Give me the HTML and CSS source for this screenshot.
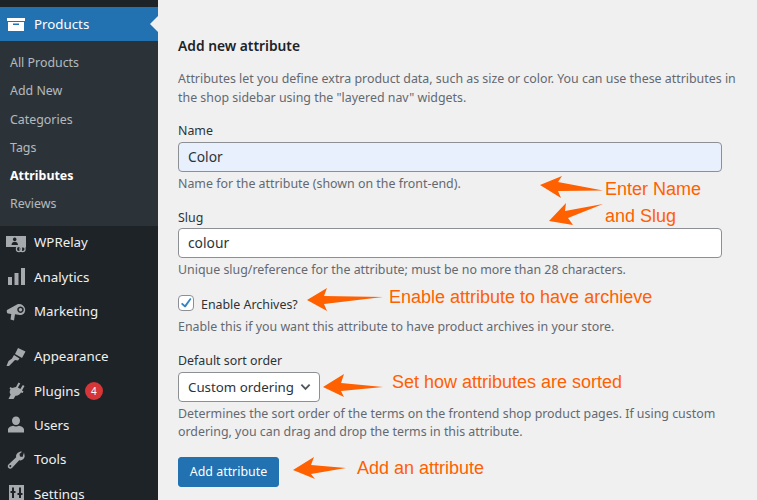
FILE: index.html
```html
<!DOCTYPE html>
<html lang="en">
<head>
<meta charset="utf-8">
<title>Add new attribute</title>
<link rel="stylesheet" href="styles.css">
</head>
<body>
<div class="page">
  <aside class="sidebar">
    <a class="menu-item current">
      <svg class="icon" viewBox="0 0 20 20"><path fill="#fff" fill-rule="evenodd" d="M1 4h18v3H1zM2 8h16v9H2zM7 9.500v1.500h6V9.500z"/></svg>
      <span>Products</span>
    </a>
    <ul class="submenu">
      <li>All Products</li>
      <li>Add New</li>
      <li>Categories</li>
      <li>Tags</li>
      <li class="active">Attributes</li>
      <li>Reviews</li>
    </ul>
    <a class="menu-item">
      <svg class="icon" viewBox="0 0 20 20"><path fill="#a7aaad" fill-rule="evenodd" d="M0 3h20v11.500h-4.500a3.500 3.500 0 0 0-5-.5H0zM8.700 4.500a1.800 1.800 0 1 0 .01 0zM5.500 12c.2-2.500 1.500-3.200 3.300-3.200s3 .7 3.200 3.200z"/><circle cx="13" cy="16" r="2.600" fill="none" stroke="#a7aaad" stroke-width="1.200"/><circle cx="16.500" cy="16" r="2.600" fill="none" stroke="#a7aaad" stroke-width="1.200"/></svg>
      <span>WPRelay</span>
    </a>
    <a class="menu-item">
      <svg class="icon" viewBox="0 0 20 20"><path fill="#a7aaad" d="M2 10h4v8H2zM8.500 6h4v12h-4zM15 1h4v17h-4z"/></svg>
      <span>Analytics</span>
    </a>
    <a class="menu-item">
      <svg class="icon" viewBox="0 0 20 20"><path fill="#a7aaad" fill-rule="evenodd" d="M1 8l10-5.500c3-1.500 7 .5 8 4 .8 3.500-1.500 6.500-5 6.500l-5-.8L8 18.500l-3.500-1 .8-5.500L2 11.500C.8 11 .5 9 1 8zM14.500 4.500a3.200 3.200 0 1 0 .01 0zM14.500 6a1.700 1.700 0 1 1-.01 0z"/></svg>
      <span>Marketing</span>
    </a>
    <div class="menu-gap"></div>
    <a class="menu-item">
      <svg class="icon" viewBox="0 0 20 20"><path fill="#a7aaad" d="M12 1l7.500 3.500-3.500 6.500-7-4zM8 8l5.500 3.500-1.500 2-3-.5-1.500 1.500L3 19H.5l2-5L6 11.500z"/></svg>
      <span>Appearance</span>
    </a>
    <a class="menu-item">
      <svg class="icon" viewBox="0 0 20 20"><path fill="#a7aaad" d="M12.500 1.500l1.800 1-2.400 4 2.500 1.500 2.400-4 1.700 1-2.500 4.500 1.500 1-1 1.500-1.500-.5c-1 2-3.200 3.500-5.500 3.200l-2 3.300H2.500l2.200-4.500C3.500 12.500 3.300 10 4.500 8.500L3.500 7.500l1-1.500 1.500 1 2-.5 2-.5z"/></svg>
      <span>Plugins</span>
      <b class="badge">4</b>
    </a>
    <a class="menu-item">
      <svg class="icon" viewBox="0 0 20 20"><path fill="#a7aaad" d="M10 1.500c2.500 0 4 2 4 4.200s-1.500 4.300-4 4.300-4-2.100-4-4.300 1.500-4.200 4-4.200zM2 17.500v-3c0-2 3-3.500 5-3.800 1.800 1 4.200 1 6 0 2 .3 5 1.800 5 3.800v3z"/></svg>
      <span>Users</span>
    </a>
    <a class="menu-item">
      <svg class="icon" viewBox="0 0 20 20"><path fill="#a7aaad" fill-rule="evenodd" d="M18 2.500l.7 3.500c0 2.500-2.500 5-5.500 4.300L6 18c-1 1-2.500 1-3.500 0s-1-2.500 0-3.500l7.700-7.200C9.500 4.500 12 2 15 1.500l1 .2-2.500 2.300.5 2.500 2.500.5zM4.300 15a1 1 0 1 0 .01 0z"/></svg>
      <span>Tools</span>
    </a>
    <a class="menu-item">
      <svg class="icon" viewBox="0 0 20 20"><path fill="#a7aaad" fill-rule="evenodd" d="M3 1h15v15H3zM6 3.500v3.500H4.500v2H6v5h2V9h1.500V7H8V3.500zM13 3.500V9h-1.500v2H13v3h2v-3h1.500V9H15V3.500z"/></svg>
      <span>Settings</span>
    </a>
  </aside>

  <main class="content">
    <h2 class="title">Add new attribute</h2>
    <p class="intro">Attributes let you define extra product data, such as size or color. You can use these attributes in the shop sidebar using the "layered nav" widgets.</p>

    <div class="field">
      <label class="label">Name</label>
      <div class="input filled">Color</div>
      <p class="hint">Name for the attribute (shown on the front-end).</p>
    </div>

    <div class="field slug-field">
      <label class="label">Slug</label>
      <div class="input">colour</div>
      <p class="hint">Unique slug/reference for the attribute; must be no more than 28 characters.</p>
    </div>

    <div class="field check-field">
      <div class="check-row">
        <span class="checkbox"><svg viewBox="0 0 16 16"><path fill="#3582c4" d="M12.700 2.400l1.500 1.100-6.500 9.400H6.300L2.300 9l1.400-1.400 3 2.800z"/></svg></span>
        <span class="check-label">Enable Archives?</span>
      </div>
      <p class="hint">Enable this if you want this attribute to have product archives in your store.</p>
    </div>

    <div class="field">
      <label class="label">Default sort order</label>
      <div class="select">Custom ordering
        <svg viewBox="0 0 12 8"><path fill="none" stroke="#50575e" stroke-width="2" d="M1.500 1.500L6 6l4.500-4.500"/></svg>
      </div>
      <p class="hint">Determines the sort order of the terms on the frontend shop product pages. If using custom ordering, you can drag and drop the terms in this attribute.</p>
    </div>

    <div class="button">Add attribute</div>
  </main>

  <div class="notes">
    <svg class="arrows" viewBox="0 0 757 500">
      <path d="M540 185L562 176L558 182L603 190.500L558 191L561 198z"/>
      <path d="M549 221L566 203L565 211L603 204L568 218L573 225z"/>
      <path d="M307 300L327 288L324 296L383 297L324 304L327 311z"/>
      <path d="M323 387L344 374L341 383L383 387L341 391L344 397z"/>
      <path d="M293 470L314 457L311 465L346 468L311 474L315 479z"/>
    </svg>
    <span class="note n1">Enter Name</span>
    <span class="note n2">and Slug</span>
    <span class="note n3">Enable attribute to have archieve</span>
    <span class="note n4">Set how attributes are sorted</span>
    <span class="note n5">Add an attribute</span>
  </div>
</div>
</body>
</html>
```

FILE: styles.css
```css
* { box-sizing: border-box; }
html, body { margin: 0; height: 100%; overflow: hidden; }
body {
  background: #f0f0f1;
  font-family: "Noto Sans", "Open Sans", sans-serif;
  font-size: 12.400px;
  color: #3c434a;
}
.page { position: relative; display: flex; width: 757px; height: 500px; overflow: hidden; }

.sidebar {
  flex: 0 0 158px;
  background: #1d2327;
  padding-top: 7px;
  font-size: 13.300px;
}
.menu-item {
  position: relative;
  display: flex;
  align-items: center;
  height: 34.300px;
  padding-left: 6px;
  color: #f0f0f1;
}
.menu-item span { position: relative; top: -0.500px; }
.menu-item .icon { flex: 0 0 20px; width: 20px; height: 20px; margin-right: 8px; }
.menu-item.current { height: 34px; background: #2271b1; color: #fff; }
.menu-item.current::after {
  content: "";
  position: absolute;
  right: 0;
  top: 50%;
  margin-top: -8px;
  border: 8px solid transparent;
  border-right-color: #f0f0f1;
  border-left-width: 0;
}
.menu-gap { height: 11px; }
.badge {
  display: inline-flex;
  align-items: center;
  justify-content: center;
  width: 18px;
  height: 18px;
  margin-left: 5px;
  border-radius: 50%;
  background: #d63638;
  color: #fff;
  font-size: 10px;
  font-weight: 400;
}
.submenu {
  list-style: none;
  margin: 0;
  padding: 8.200px 0 7.100px;
  background: #2c3338;
  color: rgba(240, 246, 252, 0.7);
  font-size: 12.400px;
}
.submenu li { height: 28.250px; line-height: 28px; padding-left: 10px; }
.submenu .active { color: #fff; font-weight: 700; }

.content { flex: 1; padding: 37px 8px 0 20px; min-width: 0; }
.title { margin: 0; font-size: 13.800px; line-height: 18px; font-weight: 600; color: #1d2327; }
.intro { margin: 15px 0 0; line-height: 18.500px; color: #646970; }
.field { margin-top: 15px; }
.label { display: block; line-height: 18px; color: #2c3338; }
.input {
  width: 544px;
  height: 30px;
  margin-top: 2px;
  padding: 0 9px;
  line-height: 28px;
  font-size: 13.800px;
  background: #fff;
  border: 1px solid #8c8f94;
  border-radius: 4px;
  color: #2c3338;
}
.slug-field .input { margin-top: 1px; }
.input.filled { background: #e8f0fe; }
.hint { max-width: 544px; margin: 3px 0 0; line-height: 18.500px; color: #646970; }
.check-field { margin-top: 16px; }
.check-field .hint { margin-top: 7px; }
.check-row { display: flex; align-items: center; height: 16px; }
.checkbox {
  display: block;
  width: 16px;
  height: 16px;
  background: #fff;
  border: 1px solid #8c8f94;
  border-radius: 4px;
}
.checkbox svg { display: block; width: 14px; height: 14px; }
.check-label { margin: 2px 0 0 7px; color: #2c3338; }
.select {
  display: inline-flex;
  align-items: center;
  gap: 6px;
  height: 30px;
  margin-top: 2px;
  padding: 0 8px 0 9px;
  font-size: 13.300px;
  background: #fff;
  border: 1px solid #8c8f94;
  border-radius: 4px;
  color: #2c3338;
}
.select svg { width: 11px; height: 8px; }
.button {
  display: inline-block;
  width: 101px;
  height: 30px;
  margin-top: 15px;
  line-height: 28px;
  text-align: center;
  background: #2271b1;
  border: 1px solid #2271b1;
  border-radius: 3px;
  color: #fff;
}

.notes { position: absolute; inset: 0; pointer-events: none; }
.arrows { position: absolute; inset: 0; width: 757px; height: 500px; }
.arrows path { fill: #ff6000; }
.note {
  position: absolute;
  font-family: "Liberation Sans", Arial, sans-serif;
  font-size: 18px;
  line-height: 20px;
  color: #ff6000;
  white-space: nowrap;
}
.n1 { left: 605px; top: 179px; }
.n2 { left: 605px; top: 206px; }
.n3 { left: 389px; top: 287px; }
.n4 { left: 392px; top: 372px; }
.n5 { left: 357px; top: 458px; }
```
